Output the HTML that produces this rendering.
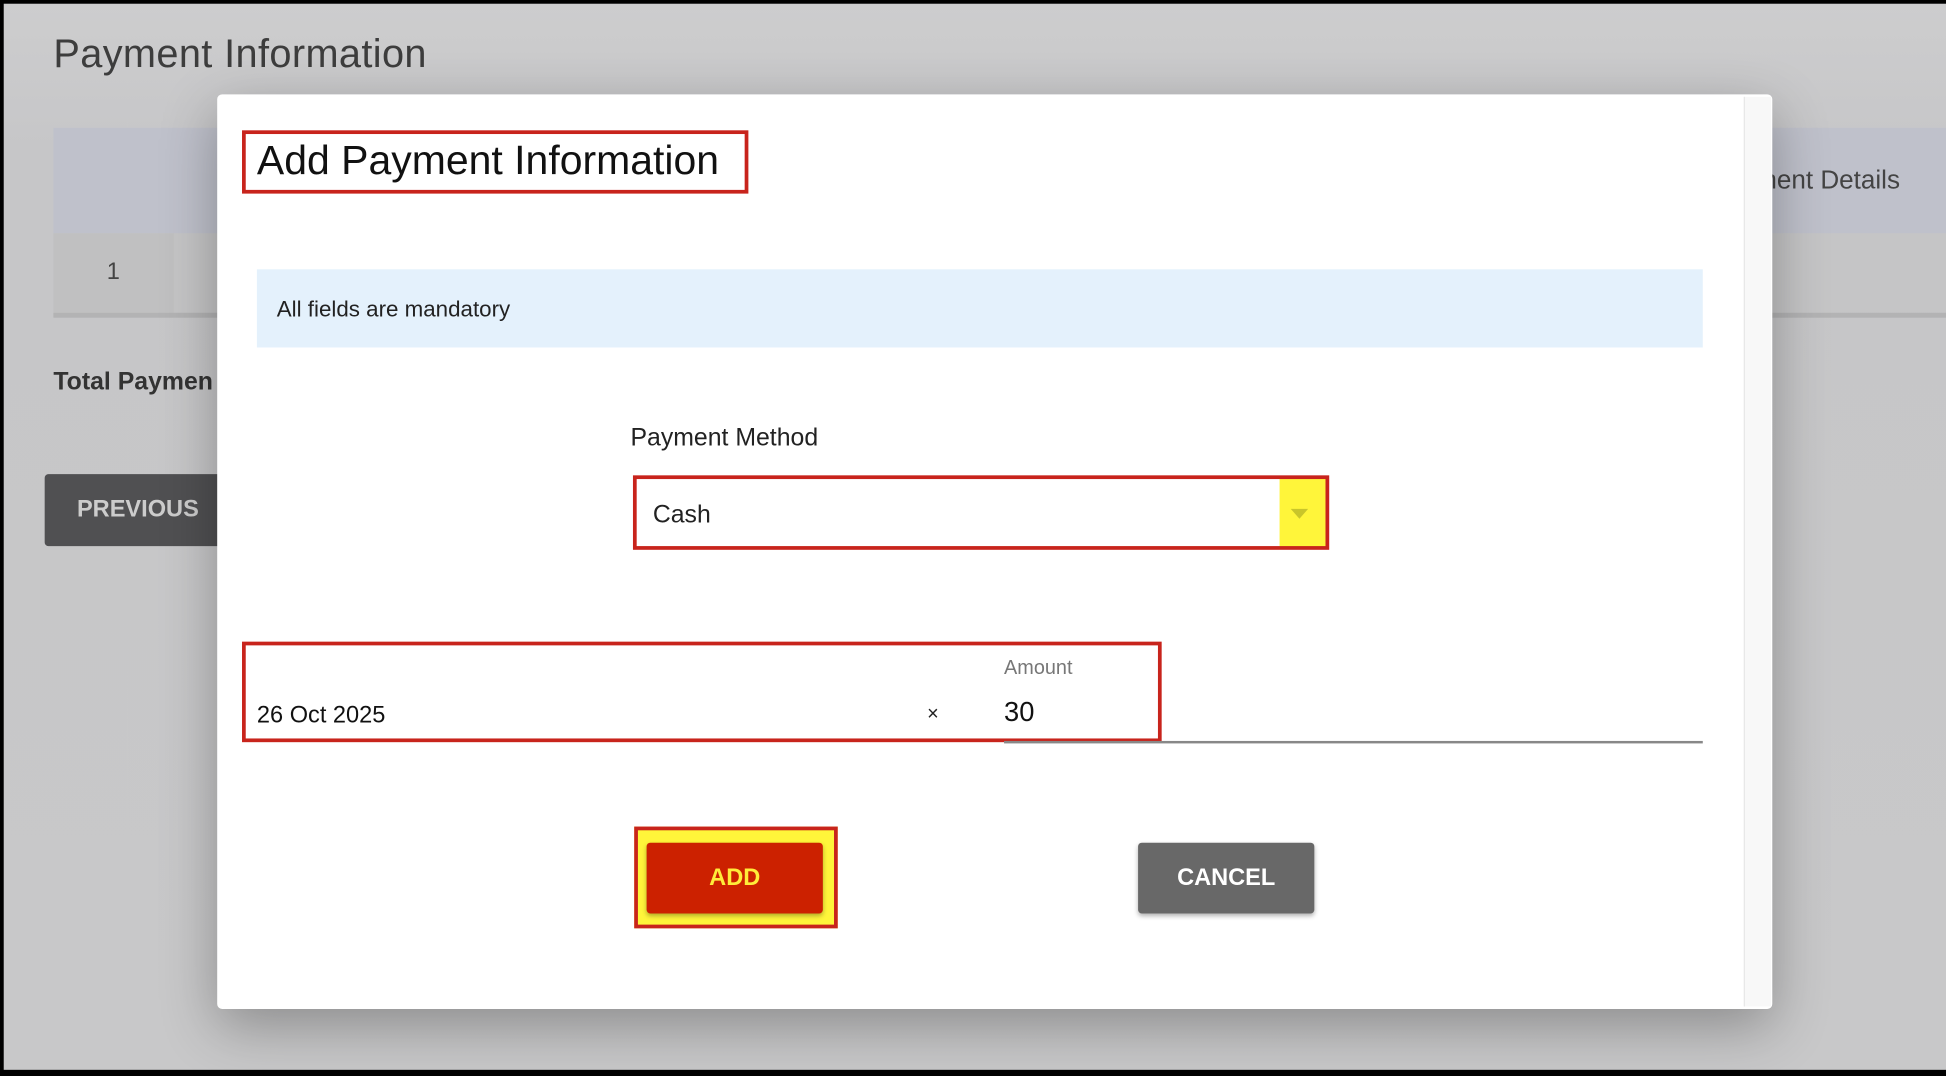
<!DOCTYPE html>
<html><head><meta charset="utf-8"><style>
*{margin:0;padding:0;box-sizing:border-box}
html,body{width:1946px;height:1076px;overflow:hidden;background:#000}
#w{position:absolute;left:0;top:0;width:1568px;height:867px;transform:scale(1.2411);transform-origin:0 0;font-family:"Liberation Sans",sans-serif;overflow:hidden}
.a{position:absolute}
#bg{left:3px;top:3px;width:1565px;height:859px;background:linear-gradient(#cdcdce,#c6c6c8 120px,#c8c8c9)}
</style></head><body><div id="w">
<div class="a" id="bg"></div>
<div class="a" style="left:43px;top:25px;font-size:32px;color:#3d3d3d;letter-spacing:0.3px">Payment Information</div>
<div class="a" style="left:43px;top:103px;width:1525px;height:85px;background:#bfc1cb"></div>
<div class="a" style="left:43px;top:188px;width:1525px;height:64px;background:#c5c5c6"></div>
<div class="a" style="left:43px;top:188px;width:97px;height:64px;background:#c0c0c1"></div>
<div class="a" style="left:43px;top:252px;width:1525px;height:4px;background:#b3b3b4"></div>
<div class="a" style="left:86px;top:209px;font-size:19px;color:#444">1</div>
<div class="a" style="left:1420px;top:134px;font-size:21px;color:#444">nent Details</div>
<div class="a" style="left:43px;top:297px;font-size:20px;font-weight:bold;color:#333">Total Paymen</div>
<div class="a" style="left:36px;top:382px;width:150px;height:58px;background:#505052;border-radius:3px;color:#ccc;font-size:19px;font-weight:bold;padding:18px 0 0 26px">PREVIOUS</div>
<div class="a" style="left:175px;top:76px;width:1253px;height:737px;background:#fff;border-radius:4px;box-shadow:0 14px 45px rgba(0,0,0,.3)"></div>
<div class="a" style="left:1405px;top:78px;width:22px;height:733px;background:#f8f8f8;border-left:1px solid #e8e8e8"></div>
<div class="a" style="left:195px;top:105px;width:408px;height:51px;border:3px solid #c8241c"></div>
<div class="a" style="left:207px;top:110px;font-size:33px;color:#111">Add Payment Information</div>
<div class="a" style="left:207px;top:217px;width:1165px;height:63px;background:#e4f1fc"></div>
<div class="a" style="left:223px;top:239px;font-size:18px;color:#222">All fields are mandatory</div>
<div class="a" style="left:508px;top:342px;font-size:20px;color:#222">Payment Method</div>
<div class="a" style="left:1031px;top:384px;width:37px;height:57px;background:#fff53a"></div>
<div class="a" style="left:510px;top:383px;width:561px;height:60px;border:3px solid #c8241c"></div>
<div class="a" style="left:1040px;top:410px;width:0;height:0;border-left:7px solid transparent;border-right:7px solid transparent;border-top:8px solid #c9c52a"></div>
<div class="a" style="left:526px;top:404px;font-size:20px;color:#222">Cash</div>
<div class="a" style="left:195px;top:517px;width:741px;height:81px;border:3px solid #c8241c"></div>
<div class="a" style="left:207px;top:566px;font-size:19px;color:#111">26 Oct 2025</div>
<div class="a" style="left:747px;top:567px;font-size:16px;color:#222">×</div>
<div class="a" style="left:809px;top:530px;font-size:16px;color:#777">Amount</div>
<div class="a" style="left:809px;top:561px;font-size:22px;color:#111">30</div>
<div class="a" style="left:809px;top:597px;width:563px;height:2px;background:#888"></div>
<div class="a" style="left:511px;top:666px;width:164px;height:82px;border:3px solid #c8241c;background:#fff53a"></div>
<div class="a" style="left:521px;top:679px;width:142px;height:57px;background:#cc2100;border-radius:3px;box-shadow:0 2px 4px rgba(0,0,0,.3);color:#ffec3a;font-size:19px;font-weight:bold;text-align:center;line-height:57px">ADD</div>
<div class="a" style="left:917px;top:679px;width:142px;height:57px;background:#686868;border-radius:3px;box-shadow:0 2px 4px rgba(0,0,0,.3);color:#fff;font-size:19px;font-weight:bold;text-align:center;line-height:57px">CANCEL</div>
</div></body></html>
